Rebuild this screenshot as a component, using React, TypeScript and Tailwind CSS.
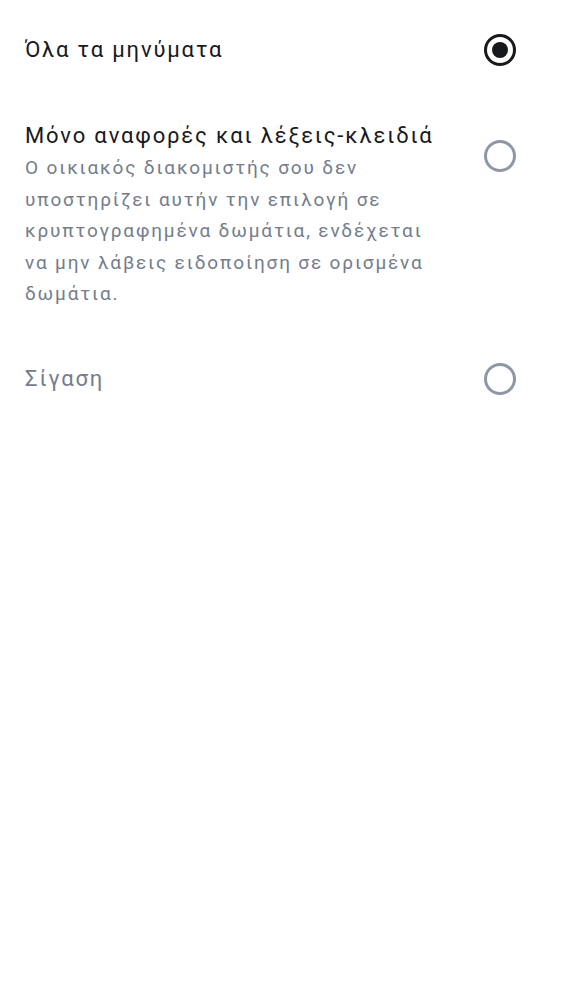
import { useState } from 'react'

type Option = {
  id: string
  label: string
  description?: string
  disabled?: boolean
}

const options: Option[] = [
  { id: 'all', label: 'Όλα τα μηνύματα' },
  {
    id: 'mentions',
    label: 'Μόνο αναφορές και λέξεις-κλειδιά',
    description:
      'Ο οικιακός διακομιστής σου δεν υποστηρίζει αυτήν την επιλογή σε κρυπτογραφημένα δωμάτια, ενδέχεται να μην λάβεις ειδοποίηση σε ορισμένα δωμάτια.',
  },
  { id: 'mute', label: 'Σίγαση', disabled: true },
]

function Radio({ checked }: { checked: boolean }) {
  return (
    <span
      className={
        checked
          ? 'flex h-[32px] w-[32px] shrink-0 items-center justify-center rounded-full border-[3px] border-[#17191c]'
          : 'flex h-[32px] w-[32px] shrink-0 items-center justify-center rounded-full border-[3px] border-[#8d97a5]'
      }
    >
      {checked && <span className="h-[16px] w-[16px] rounded-full bg-[#17191c]" />}
    </span>
  )
}

export default function App() {
  const [selected, setSelected] = useState('all')

  return (
    <div className="min-h-screen bg-white font-['Roboto',sans-serif] tracking-[1.85px]">
      {/* notification options list */}
      <div className="flex flex-col gap-[53px] pt-[34px]">
        {options.map((opt) => (
          <button
            key={opt.id}
            onClick={() => setSelected(opt.id)}
            className={
              opt.description
                ? 'flex items-start justify-between pl-[25px] pr-[46px] text-left'
                : 'flex items-center justify-between pl-[25px] pr-[46px] text-left'
            }
          >
            <div className="flex w-[420px] flex-col">
              <span
                className={
                  opt.disabled
                    ? 'text-[22px] leading-[32px] text-[#737d8c]'
                    : opt.description
                      ? 'text-[22px] leading-[33px] text-[#17191c]'
                      : 'text-[22px] leading-[32px] text-[#17191c]'
                }
              >
                {opt.label}
              </span>
              {opt.description && (
                <span className="text-[19px] leading-[31.5px] text-[#737d8c]">{opt.description}</span>
              )}
            </div>
            <span className={opt.description ? 'pt-[21px]' : ''}>
              <Radio checked={selected === opt.id} />
            </span>
          </button>
        ))}
      </div>
    </div>
  )
}
